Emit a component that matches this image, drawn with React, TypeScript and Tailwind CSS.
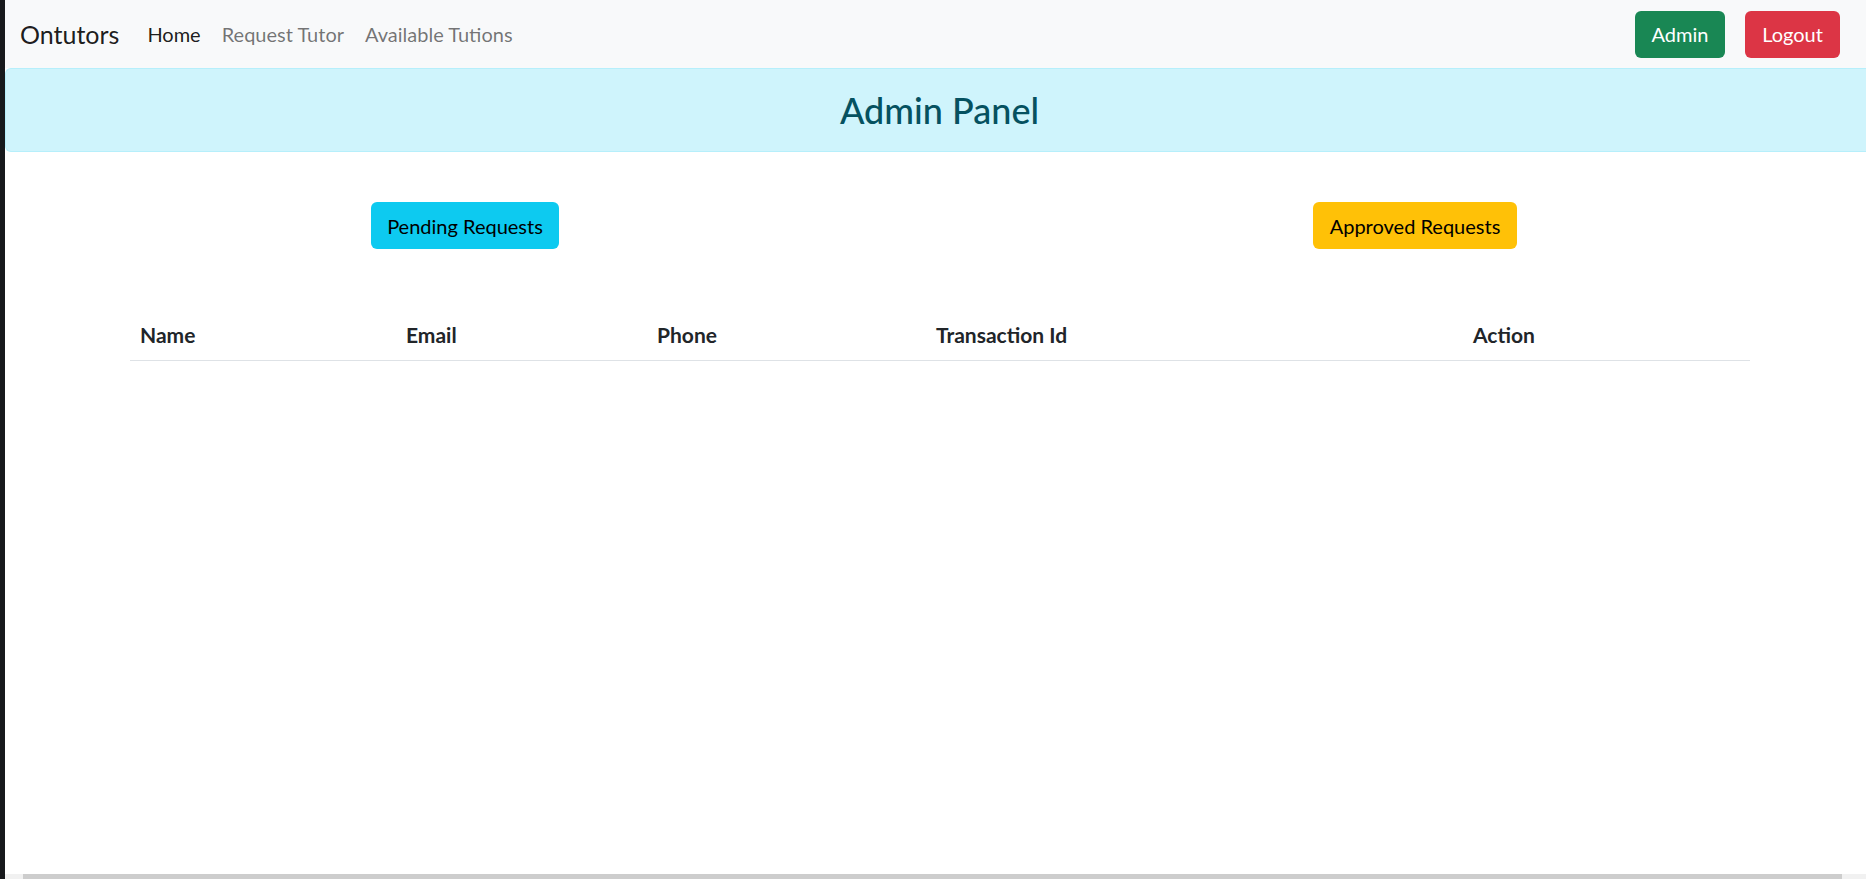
const navLinks = [
  { label: "Home", active: true },
  { label: "Request Tutor", active: false },
  { label: "Available Tutions", active: false },
];

const columns = [
  { label: "Name", width: "w-[266px]" },
  { label: "Email", width: "w-[251px]" },
  { label: "Phone", width: "w-[279px]" },
  { label: "Transaction Id", width: "w-[537px]" },
  { label: "Action", width: "w-[287px]" },
];

const App = () => {
  return (
    <div className="flex h-screen bg-[#17191c] font-['Lato','Liberation_Sans',sans-serif] text-[#212529]">
      <div className="w-[5px] shrink-0" />

      <div className="flex flex-1 flex-col bg-white">
        {/* navbar */}
        <nav className="flex h-[68px] shrink-0 items-center bg-[#f8f9fa] pl-[15px] pr-[26px]">
          <span className="text-[25px] leading-none text-black/90">Ontutors</span>
          <div className="ml-[28px] flex items-center gap-[21px] text-[20px] leading-none">
            {navLinks.map((link) => (
              <a
                key={link.label}
                href="#"
                className={link.active ? "text-black/90" : "text-black/55"}
              >
                {link.label}
              </a>
            ))}
          </div>
          <div className="ml-auto flex items-center gap-[20px]">
            <button className="h-[47px] w-[90px] rounded-[6px] bg-[#198754] text-[20px] text-white">
              Admin
            </button>
            <button className="h-[47px] w-[95px] rounded-[6px] bg-[#dc3545] text-[20px] text-white">
              Logout
            </button>
          </div>
        </nav>

        {/* alert */}
        <div className="flex h-[84px] shrink-0 items-center justify-center rounded-l-[6px] border border-r-0 border-[#b6effb] bg-[#cff4fc] pl-[7px]">
          <h3 className="text-[36px] font-medium leading-none text-[#055160]">Admin Panel</h3>
        </div>

        {/* toggles */}
        <div className="mt-[50px] flex pl-[366px]">
          <button className="h-[47px] w-[188px] rounded-[6px] bg-[#0dcaf0] text-[20px] text-black">
            Pending Requests
          </button>
          <button className="ml-[754px] h-[47px] w-[204px] rounded-[6px] bg-[#ffc107] text-[20px] text-black">
            Approved Requests
          </button>
        </div>

        {/* table */}
        <div className="ml-[125px] mt-[61px] w-[1620px]">
          <table className="w-full table-fixed border-collapse">
            <thead>
              <tr className="border-b border-[#dee2e6]">
                {columns.map((col) => (
                  <th
                    key={col.label}
                    className={`${col.width} h-[50px] px-[10px] text-left text-[21px] font-bold text-[#212529]`}
                  >
                    {col.label}
                  </th>
                ))}
              </tr>
            </thead>
            <tbody />
          </table>
        </div>

        <div className="flex-1" />

        {/* horizontal scrollbar */}
        <div className="flex h-[5px] shrink-0 bg-[#f1f1f1] pl-[18px] pr-[24px]">
          <div className="flex-1 bg-[#cdcdcd]" />
        </div>
      </div>
    </div>
  );
};

export default App;
